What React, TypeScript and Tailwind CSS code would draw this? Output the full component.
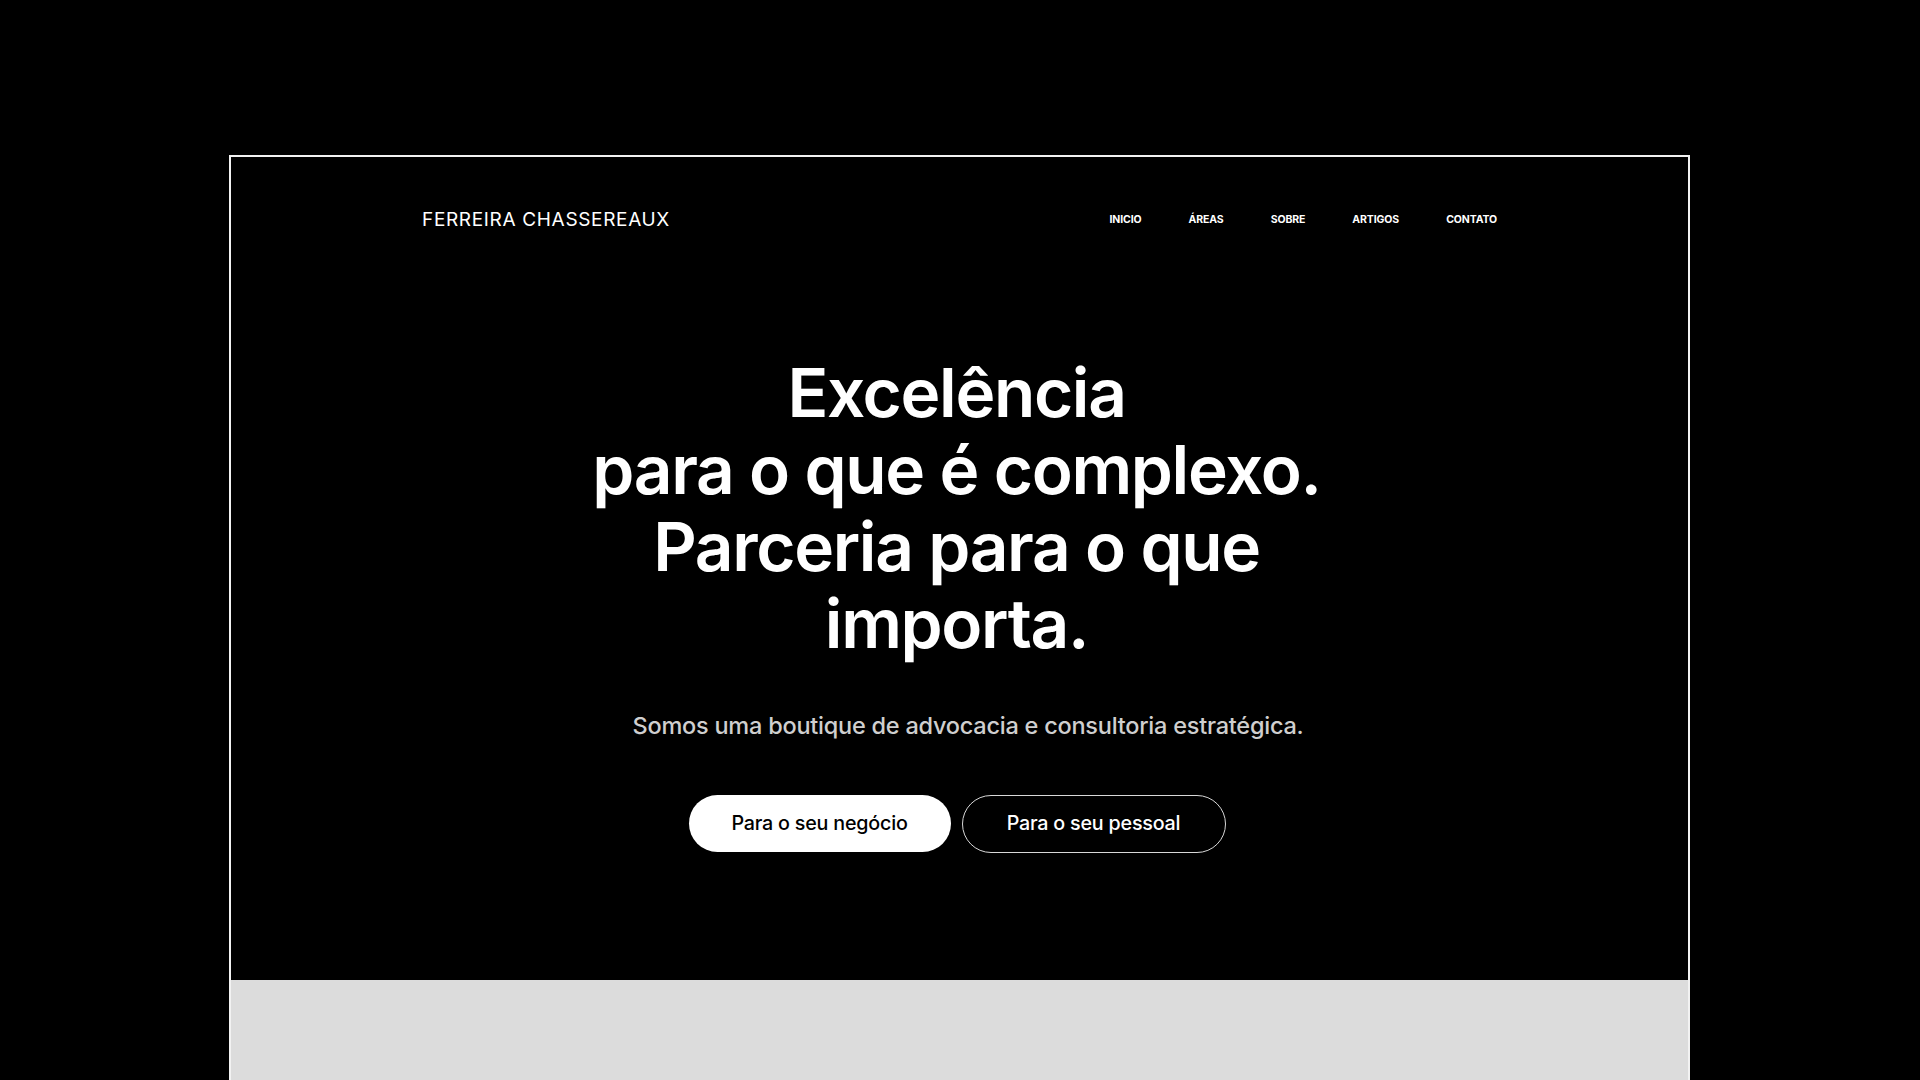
const NAV = ['INICIO', 'ÁREAS', 'SOBRE', 'ARTIGOS', 'CONTATO'];

export default function App() {
  return (
    <div className="h-screen overflow-hidden bg-black pt-[155px]" style={{ fontFamily: 'Inter, "Noto Sans", sans-serif' }}>
      <div className="ml-[229px] mr-[230px] border-2 border-b-0 border-[#f2f2f2]">
        {/* hero */}
        <section className="flex h-[823px] flex-col bg-black">
          <header className="flex items-center justify-between px-[191px] pt-[43px]">
            <div className="flex h-10 items-center text-[19px] font-normal tracking-[0.035em] text-white">
              FERREIRA CHASSEREAUX
            </div>
            <nav className="flex items-center gap-[47px] text-[10.5px] font-bold tracking-[-0.01em] text-white">
              {NAV.map((n) => (
                <a key={n} href="#" className="leading-none">{n}</a>
              ))}
            </nav>
          </header>

          <h1 className="mt-[114px] pr-[6px] text-center text-[67.5px] font-semibold leading-[77px] tracking-[-0.02em] text-white">
            Excelência
            <br />
            para o que é complexo.
            <br />
            Parceria para o que
            <br />
            importa.
          </h1>

          <p className="mt-[48px] pl-[17px] text-center text-[23.5px] font-medium leading-8 tracking-[-0.01em] text-[#cfcfcf]">
            Somos uma boutique de advocacia e consultoria estratégica.
          </p>

          <div className="mt-[53px] flex justify-center gap-[11px] pr-[5px]">
            <button className="h-[57px] w-[262px] rounded-full bg-white text-[19.7px] font-medium tracking-[-0.01em] text-black">
              Para o seu negócio
            </button>
            <button className="h-[58px] w-[264px] rounded-full border border-[#d8d8d8] bg-black text-[19.7px] font-medium tracking-[-0.01em] text-white">
              Para o seu pessoal
            </button>
          </div>
        </section>

        {/* next section peeking in */}
        <section className="h-[200px] bg-[#dcdcdc]" />
      </div>
    </div>
  );
}
